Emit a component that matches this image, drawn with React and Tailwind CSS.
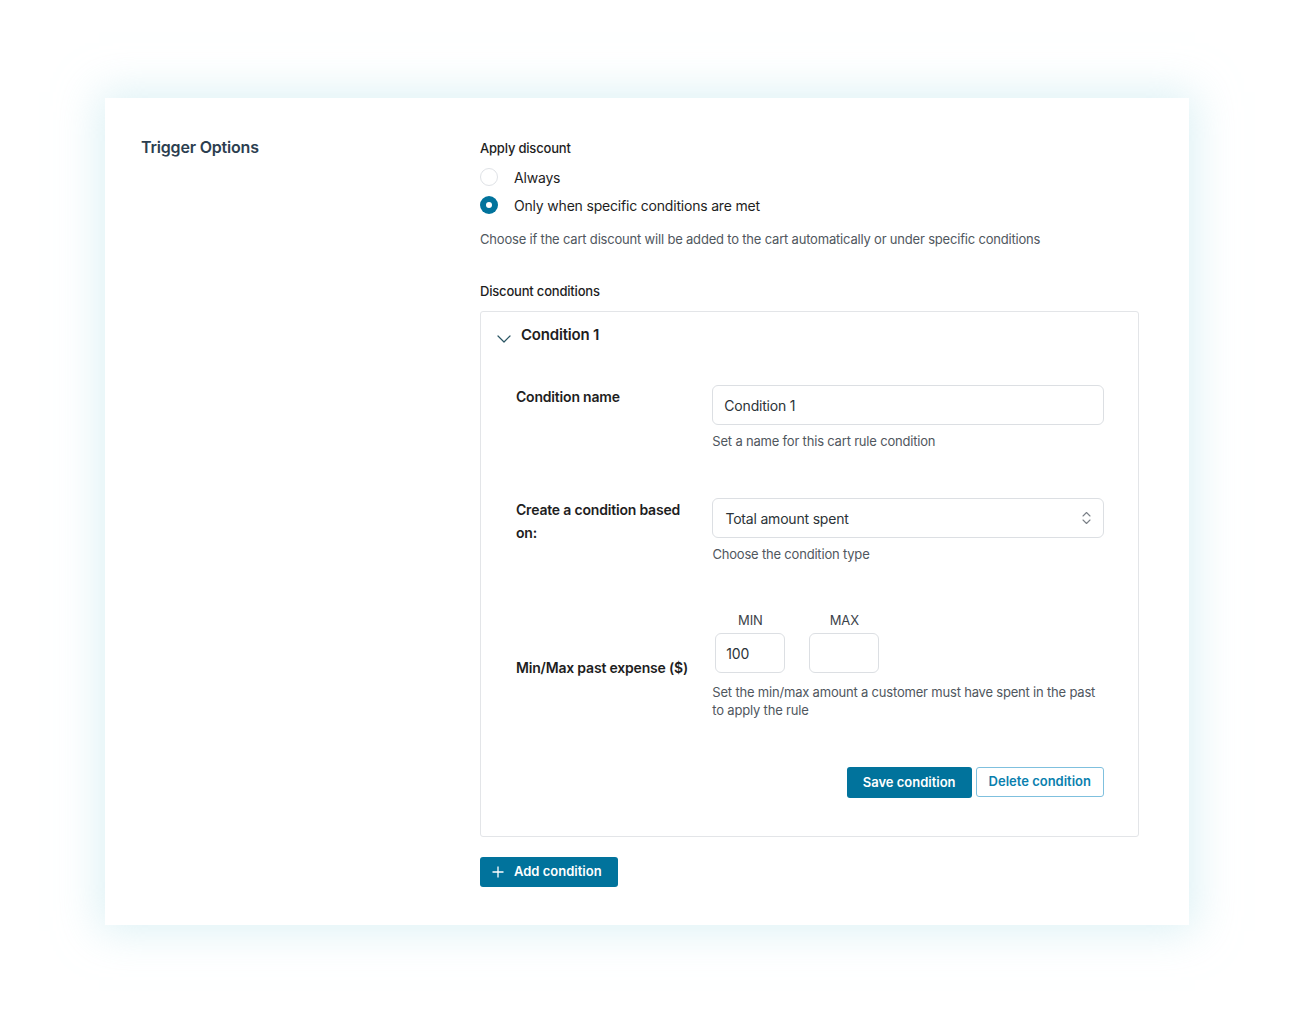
import { useState } from "react";

const BRAND = "bg-[#01739c]";

function Radio({ checked, label, onClick }) {
  return (
    <button type="button" onClick={onClick} className="flex h-[28px] items-center text-left">
      {checked ? (
        <span className="flex h-[18px] w-[18px] items-center justify-center rounded-full bg-[#01739c]">
          <span className="h-[6px] w-[6px] rounded-full bg-white" />
        </span>
      ) : (
        <span className="h-[18px] w-[18px] rounded-full border border-[#dfe2e6] bg-white" />
      )}
      <span className="ml-[16px] text-[14px] text-[#1e1e1e]">{label}</span>
    </button>
  );
}

function Help({ children, className = "" }) {
  return <p className={"text-[13px] leading-[18px] text-[#50575e] " + className}>{children}</p>;
}

export default function App() {
  const [mode, setMode] = useState("conditions");
  const [name, setName] = useState("Condition 1");
  const [min, setMin] = useState("100");
  const [max, setMax] = useState("");

  return (
    <div className="min-h-[1015px] bg-white pt-[98px] font-['Inter','Noto_Sans',sans-serif] tracking-[-0.012em] antialiased">
      <div className="ml-[105px] flex h-[827px] w-[1084px] bg-white pl-[36px] pt-[39px] shadow-[0_0_40px_6px_rgba(196,232,238,0.6)]">
        <div className="w-[339px]">
          <h2 className="text-[16px] font-semibold leading-[20px] text-[#2c3e50]">Trigger Options</h2>
        </div>

        <div className="w-[659px]">
          <p className="text-[13px] font-medium leading-[22px] text-[#1e1e1e]">Apply discount</p>
          <div className="mt-[4px] flex flex-col">
            <Radio checked={mode === "always"} label="Always" onClick={() => setMode("always")} />
            <Radio checked={mode === "conditions"} label="Only when specific conditions are met" onClick={() => setMode("conditions")} />
          </div>
          <Help className="mt-[11px]">Choose if the cart discount will be added to the cart automatically or under specific conditions</Help>

          <p className="mt-[34px] text-[13px] font-medium leading-[18px] text-[#1e1e1e]">Discount conditions</p>

          <div className="mt-[11px] rounded-[3px] border border-[#e3e5e8] pb-[38px] pl-[16px] pr-[34px] pt-[12px]">
            <div className="flex items-center">
              <svg width="14" height="8" viewBox="0 0 14 8" fill="none" className="mt-[7px]">
                <polyline points="1,1 7,7 13,1" stroke="#2a5563" strokeWidth="1.2" strokeLinecap="round" strokeLinejoin="round" />
              </svg>
              <h3 className="ml-[10px] text-[15px] font-semibold leading-[22px] text-[#1e1e1e]">Condition 1</h3>
            </div>

            <div className="mt-[39px] flex pl-[19px]">
              <div className="w-[197px] text-[14px] font-semibold leading-[23px] text-[#1e1e1e]">Condition name</div>
              <div className="w-[393px]">
                <input
                  value={name}
                  onChange={(e) => setName(e.target.value)}
                  className="h-[40px] w-full rounded-[6px] border border-[#dcdfe3] px-[11px] text-[14px] text-[#2c3338] outline-none"
                />
                <Help className="mt-[7px]">Set a name for this cart rule condition</Help>
              </div>
            </div>

            <div className="mt-[48px] flex pl-[19px]">
              <div className="w-[197px] pr-[20px] text-[14px] font-semibold leading-[23px] text-[#1e1e1e]">
                Create a condition based on:
              </div>
              <div className="w-[393px]">
                <div className="flex h-[40px] w-full items-center justify-between rounded-[6px] border border-[#dcdfe3] pl-[12px] pr-[12px] text-[14px] text-[#2c3338]">
                  <span>Total amount spent</span>
                  <svg width="9" height="14" viewBox="0 0 9 14" fill="none">
                    <polyline points="1,5 4.5,1.5 8,5" stroke="#7a8087" strokeWidth="1.1" strokeLinecap="round" strokeLinejoin="round" />
                    <polyline points="1,9 4.5,12.5 8,9" stroke="#7a8087" strokeWidth="1.1" strokeLinecap="round" strokeLinejoin="round" />
                  </svg>
                </div>
                <Help className="mt-[7px]">Choose the condition type</Help>
              </div>
            </div>

            <div className="mt-[49px] flex items-center pl-[19px]">
              <div className="w-[197px] pt-[4px] text-[14px] font-semibold leading-[23px] text-[#1e1e1e]">
                Min/Max past expense ($)
              </div>
              <div className="w-[393px]">
                <div className="flex gap-[24px] pl-[3px]">
                  <label className="flex w-[70px] flex-col items-center">
                    <span className="text-[13px] leading-[16px] text-[#3c434a]">MIN</span>
                    <input
                      value={min}
                      onChange={(e) => setMin(e.target.value)}
                      className="mt-[5px] h-[40px] w-[70px] rounded-[6px] border border-[#dcdfe3] px-[10px] text-[14px] text-[#2c3338] outline-none"
                    />
                  </label>
                  <label className="flex w-[70px] flex-col items-center">
                    <span className="text-[13px] leading-[16px] text-[#3c434a]">MAX</span>
                    <input
                      value={max}
                      onChange={(e) => setMax(e.target.value)}
                      className="mt-[5px] h-[40px] w-[70px] rounded-[6px] border border-[#dcdfe3] px-[10px] text-[14px] text-[#2c3338] outline-none"
                    />
                  </label>
                </div>
                <Help className="mt-[10px]">Set the min/max amount a customer must have spent in the past to apply the rule</Help>
              </div>
            </div>

            <div className="mt-[48px] flex justify-end gap-[4px] tracking-normal">
              <button type="button" className={BRAND + " h-[31px] rounded-[3px] px-[16px] text-[13px] font-semibold text-white"}>
                Save condition
              </button>
              <button type="button" className="h-[30px] rounded-[3px] border border-[#7fc0de] bg-white px-[12px] text-[13px] font-semibold text-[#0a7fae]">
                Delete condition
              </button>
            </div>
          </div>

          <button type="button" className={BRAND + " mt-[20px] flex h-[30px] items-center rounded-[3px] pl-[12px] pr-[16px] text-[13px] font-semibold tracking-normal text-white"}>
            <svg width="12" height="12" viewBox="0 0 12 12" fill="none">
              <path d="M6 0.5v11M0.5 6h11" stroke="white" strokeWidth="1.3" />
            </svg>
            <span className="ml-[10px]">Add condition</span>
          </button>
        </div>
      </div>
    </div>
  );
}
